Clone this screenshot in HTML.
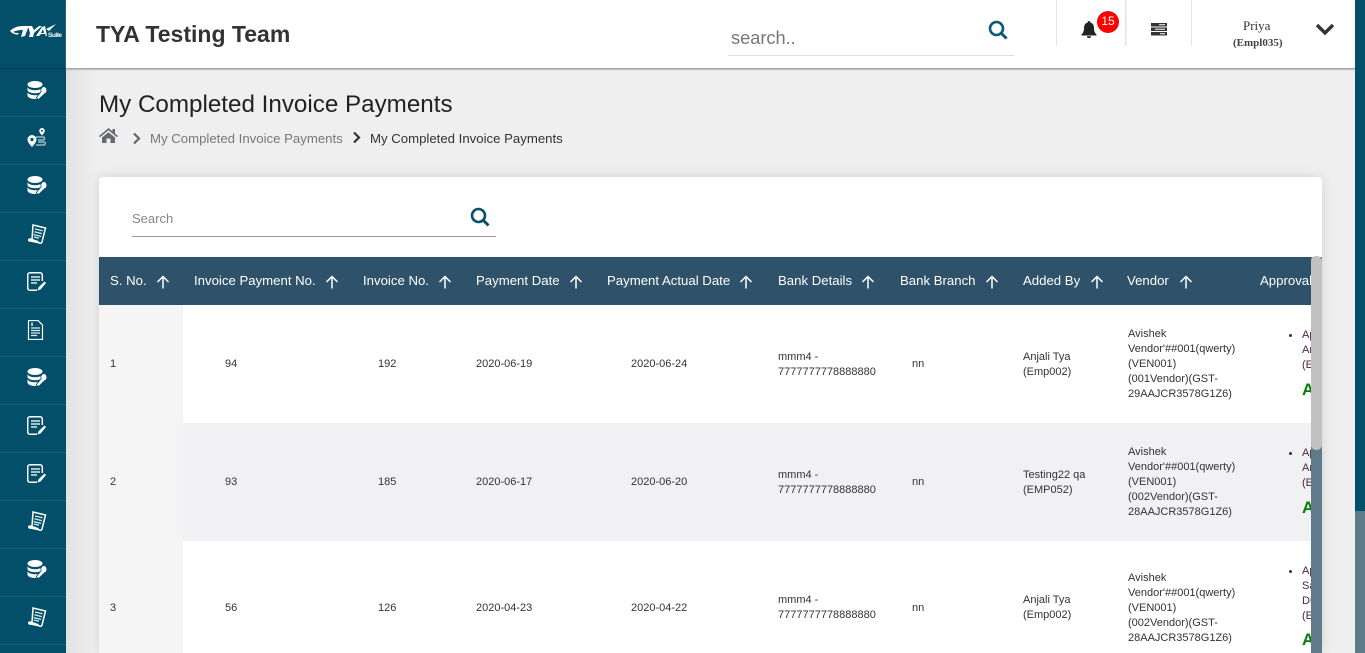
<!DOCTYPE html>
<html><head><meta charset="utf-8"><title>My Completed Invoice Payments</title>
<style>
*{box-sizing:border-box}
html,body{margin:0;padding:0;width:1365px;height:653px;overflow:hidden;background:#efefef;font-family:"Liberation Sans",sans-serif}
.a{position:absolute;white-space:nowrap}
#side{position:absolute;left:0;top:0;width:66px;height:653px;background:#034f69}
#side i{position:absolute;left:0;width:66px;height:1px;background:#1d6179}
#side svg{position:absolute;left:27px;width:20px;height:20px}
.sh{position:absolute;left:66px;top:69px;width:30px;height:584px;background:linear-gradient(90deg,#e2e2e2,#efefef)}
#head{position:absolute;left:66px;top:0;width:1289px;height:69px;background:#fff;border-bottom:1px solid #a5a5a5;box-shadow:0 1px 1px #bbb}
.vl{position:absolute;top:0;width:1px;height:46px;background:#e6e6e6}
#card{position:absolute;left:99px;top:177px;width:1223px;height:476px;background:#fff;border-radius:4px 4px 0 0;box-shadow:0 0 12px rgba(0,0,0,.12);overflow:hidden}
#thead{position:absolute;left:99px;top:257px;width:1212px;height:48px;background:#2d5269;overflow:hidden}
#thead span{position:absolute;top:16px;font-size:13.2px;color:#fff;white-space:nowrap}
#thead svg{position:absolute;top:18px;width:14px;height:14px}
.row{position:absolute;left:99px;width:1212px;overflow:hidden}
.row span,.row b,.row div{position:absolute}
.c{font-size:11px;color:#333;line-height:15px;white-space:nowrap;margin-top:1px}
.vend{left:1029px;font-size:11px;line-height:15px;color:#333;white-space:nowrap;margin-top:1px}
.dot{left:1190px;width:3px;height:3px;border-radius:50%;background:#333}
.ap{left:1203px;font-size:11px;line-height:15px;color:#4b2342;white-space:nowrap;margin-top:1px}
.A{left:1203px;font-size:17px;font-weight:bold;color:#0a7c0a}
</style></head><body>
<svg width="0" height="0" style="position:absolute"><defs>
<g id="db"><ellipse cx="8" cy="3.500" rx="7.500" ry="3.500" fill="#fff"/><path d="M.5 5.800c0 2 3.300 3.500 7.500 3.500s7.500-1.500 7.500-3.500v3c0 2-3.300 3.500-7.500 3.500s-7.500-1.500-7.500-3.500z" fill="#fff"/><path d="M.5 10.800c0 2 3.300 3.500 7.500 3.500 1 0 2-.1 3-.3l-1 3.800c-.6.1-1.300.2-2 .2-4.200 0-7.500-1.600-7.500-3.600z" fill="#fff"/><path d="M16.500 5.500a3.800 3.800 0 0 1 1 7.300l-6 5.700-2.300-1.800 5-6a3.800 3.800 0 0 1 2.300-5.200z" fill="#fff" stroke="#034f69" stroke-width=".8"/></g>
<g id="map"><path d="M15 0a2.800 2.800 0 0 0-2.800 2.800c0 2 2.800 4.700 2.800 4.700s2.800-2.700 2.800-4.700A2.800 2.800 0 0 0 15 0z" fill="#fff"/><circle cx="15" cy="2.800" r="1" fill="#034f69"/><path d="M5 7a4.500 4.500 0 0 0-4.500 4.500C.5 14.500 5 19 5 19s4.500-4.500 4.500-7.500A4.500 4.500 0 0 0 5 7z" fill="#fff"/><circle cx="5" cy="11.500" r="1.600" fill="#034f69"/><path d="M9 9h7.500c1.500 0 1.500 3-.5 3h-5M11 14h6.500c1 0 1 3-.5 3H9" fill="none" stroke="#b8d0d8" stroke-width="1.200"/></g>
<g id="scroll"><path d="M6 1l12.500 3-3.500 14c-.4 1-1.300 1.500-2.200 1.200L5 15.500z" fill="none" stroke="#fff" stroke-width="1.500"/><path d="M1 15.500c.5-1 1.500-1.500 3-1l7.500 2.500c-.3 1-.2 1.800.5 2.500l-8.500-1.800C2 18.200.8 17 1 15.500z" fill="#fff"/><path d="M8 5l7.500 1.800M7.300 7.800l7.500 1.800M6.600 10.600l7.500 1.800M7 13l5 1.300" stroke="#dce9ed" stroke-width="1.300" fill="none"/></g>
<g id="note"><path d="M11 18.300H4a2.300 2.300 0 0 1-2.300-2.300V3A2.300 2.300 0 0 1 4 .8h10A2.300 2.300 0 0 1 16.300 3v6" fill="none" stroke="#fff" stroke-width="1.500" transform="translate(-1 0)"/><path d="M4 5h9M4 8h9M4 11h6" stroke="#dce9ed" stroke-width="1.600"/><path d="M17.500 9.500l1.500 1.500-5.500 6.500-3 1 .8-3z" fill="#fff"/></g>
<g id="doc"><path d="M2.500 .5h9.500l4.500 4.500v14.500h-14z" fill="none" stroke="#fff" stroke-width="1.200"/><path d="M5 8h9M5 10.500h9M5 13h9M5 15.500h6" stroke="#dce9ed" stroke-width="1.300"/><path d="M6 2.500v3.500" stroke="#fff" stroke-width="1.300"/></g>
<g id="up"><path d="M7 13.500V1.500M1.500 7L7 1.500 12.500 7" fill="none" stroke="#fff" stroke-width="1.500"/></g>
</defs></svg>

<div id="side">
<svg style="left:10px;top:20px;width:52px;height:20px;overflow:visible" viewBox="0 0 52 20"><path d="M0 11c3-3 7-5 13-5h9l-4 2-3 8-4 1 2-7c-5 0-8 1-10 2 2 1 4 1 6 1l-1 1.500c-3 0-6-.8-8-3.500zM18 6h4l2 4 5-4h3l-8 7-1 4h-4l1-4zM32 7l3-1 2 10h-1.300l-.3-2H31l-2 2h-3zM33 9l-2 4h3z" fill="#fff"/><path d="M36 9l10-5-7 7z" fill="#fff"/><text x="38" y="17" font-family="Liberation Sans" font-size="6.500" font-weight="bold" fill="#fff" textLength="14">Suite</text></svg>
<i style="top:68px;background:#023b50"></i><i style="top:116px"></i><i style="top:164px"></i><i style="top:212px"></i><i style="top:260px"></i><i style="top:308px"></i><i style="top:356px"></i><i style="top:404px"></i><i style="top:452px"></i><i style="top:500px"></i><i style="top:548px"></i><i style="top:596px"></i><i style="top:644px"></i>
<svg style="top:81px" viewBox="0 0 20 20"><use href="#db"/></svg>
<svg style="top:128px" viewBox="0 0 20 20"><use href="#map"/></svg>
<svg style="top:176px" viewBox="0 0 20 20"><use href="#db"/></svg>
<svg style="top:224px" viewBox="0 0 20 20"><use href="#scroll"/></svg>
<svg style="top:272px" viewBox="0 0 20 20"><use href="#note"/></svg>
<svg style="top:320px;left:26px" viewBox="0 0 20 20"><use href="#doc"/></svg>
<svg style="top:368px" viewBox="0 0 20 20"><use href="#db"/></svg>
<svg style="top:416px" viewBox="0 0 20 20"><use href="#note"/></svg>
<svg style="top:464px" viewBox="0 0 20 20"><use href="#note"/></svg>
<svg style="top:511px" viewBox="0 0 20 20"><use href="#scroll"/></svg>
<svg style="top:560px" viewBox="0 0 20 20"><use href="#db"/></svg>
<svg style="top:607px" viewBox="0 0 20 20"><use href="#scroll"/></svg>
</div>
<div class="sh"></div>

<div id="head">
<div class="a" style="left:30px;top:21px;font-size:23px;font-weight:bold;color:#333">TYA Testing Team</div>
<div class="a" style="left:665px;top:28px;font-size:18.2px;color:#777">search..</div>
<div class="a" style="left:662px;top:55px;width:286px;height:1px;background:#ddd"></div>
<svg class="a" style="left:922px;top:20px" width="20" height="20" viewBox="0 0 20 20"><circle cx="8.500" cy="8.500" r="6.500" fill="none" stroke="#0c5a75" stroke-width="2.600"/><path d="M13.500 13.500l5 5" stroke="#0c5a75" stroke-width="3"/></svg>
<div class="vl" style="left:990px"></div><div class="vl" style="left:1059px"></div><div class="vl" style="left:1060px;background:#eee"></div><div class="vl" style="left:1125px"></div>
<svg class="a" style="left:1015px;top:21px" width="16" height="17" viewBox="0 0 16 17"><path d="M8 0a1.300 1.300 0 0 1 1.300 1.500C12 2.200 13 4.500 13 7c0 3.500 1 5 2.500 6.500v1H.5v-1C2 12 3 10.500 3 7c0-2.500 1-4.800 3.700-5.500A1.300 1.300 0 0 1 8 0zM6 15.300h4a2 2 0 0 1-4 0z" fill="#222"/></svg>
<div class="a" style="left:1031px;top:11px;width:22px;height:22px;border-radius:50%;background:#f00;color:#fff;font-size:12px;text-align:center;line-height:20px">15</div>
<svg class="a" style="left:1085px;top:23px" width="16" height="13" viewBox="0 0 16 13"><path d="M0 0h16v3.500H0zM0 4.500h16V8H0zM0 9h16v3.500H0z" fill="#333"/><path d="M8 1.700h6M4 6.200h10M9 10.700h5" stroke="#fff" stroke-width="1"/></svg>
<div class="a" style="left:1177px;top:18px;font:13px 'Liberation Serif',serif;color:#333">Priya</div>
<div class="a" style="left:1167px;top:37px;font:bold 11px 'Liberation Serif',serif;color:#444">(Empl035)</div>
<svg class="a" style="left:1249px;top:22px" width="20" height="14" viewBox="0 0 20 14"><path d="M2 3l8 8 8-8" fill="none" stroke="#333" stroke-width="3.400"/></svg>
</div>

<div class="a" style="left:99px;top:91px;font-size:24.2px;color:#222">My Completed Invoice Payments</div>
<svg class="a" style="left:99px;top:127px" width="19" height="16" viewBox="0 0 19 16"><path d="M9.500 1L0 9l1 1.200 8.500-7 8.500 7L19 9l-3-2.500V2h-2.500v2.400zM3 10.500V16h4.500v-4.500h4V16H16v-5.500L9.500 5.200z" fill="#66696e"/></svg>
<svg class="a" style="left:132px;top:132px" width="10" height="13" viewBox="0 0 10 13"><path d="M2 1.500l5 5-5 5" fill="none" stroke="#666" stroke-width="2.200"/></svg>
<div class="a" style="left:150px;top:131px;font-size:13.200px;color:#777">My Completed Invoice Payments</div>
<svg class="a" style="left:352px;top:131px" width="10" height="13" viewBox="0 0 10 13"><path d="M2 1.500l5 5-5 5" fill="none" stroke="#333" stroke-width="2.200"/></svg>
<div class="a" style="left:370px;top:131px;font-size:13.200px;color:#333">My Completed Invoice Payments</div>

<div id="card"></div>
<div class="a" style="left:132px;top:211px;font-size:13px;color:#888">Search</div>
<div class="a" style="left:132px;top:236px;width:364px;height:1px;background:#999"></div>
<svg class="a" style="left:470px;top:207px" width="20" height="20" viewBox="0 0 20 20"><circle cx="8.500" cy="8.500" r="6.500" fill="none" stroke="#0c4f69" stroke-width="2.600"/><path d="M13.500 13.500l5 5" stroke="#0c4f69" stroke-width="3"/></svg>

<div id="thead">
<span style="left:11px">S. No.</span><svg style="left:57px" viewBox="0 0 14 14"><use href="#up"/></svg>
<span style="left:95px">Invoice Payment No.</span><svg style="left:226px" viewBox="0 0 14 14"><use href="#up"/></svg>
<span style="left:264px">Invoice No.</span><svg style="left:339px" viewBox="0 0 14 14"><use href="#up"/></svg>
<span style="left:377px">Payment Date</span><svg style="left:470px" viewBox="0 0 14 14"><use href="#up"/></svg>
<span style="left:508px">Payment Actual Date</span><svg style="left:640px" viewBox="0 0 14 14"><use href="#up"/></svg>
<span style="left:679px">Bank Details</span><svg style="left:762px" viewBox="0 0 14 14"><use href="#up"/></svg>
<span style="left:801px">Bank Branch</span><svg style="left:886px" viewBox="0 0 14 14"><use href="#up"/></svg>
<span style="left:924px">Added By</span><svg style="left:991px" viewBox="0 0 14 14"><use href="#up"/></svg>
<span style="left:1028px">Vendor</span><svg style="left:1080px" viewBox="0 0 14 14"><use href="#up"/></svg>
<span style="left:1161px">Approval</span>
</div>

<div class="row" style="top:305px;height:118px;background:#fff">
<div style="left:0;top:0;width:84px;height:118px;background:#f5f5f5"></div>
<span class="c" style="left:11px;top:51px">1</span><span class="c" style="left:126px;top:51px">94</span><span class="c" style="left:279px;top:51px">192</span><span class="c" style="left:377px;top:51px">2020-06-19</span><span class="c" style="left:532px;top:51px">2020-06-24</span>
<span class="c" style="left:679px;top:44px">mmm4 -<br>7777777778888880</span><span class="c" style="left:813px;top:51px">nn</span><span class="c" style="left:924px;top:44px">Anjali Tya<br>(Emp002)</span>
<span class="vend" style="top:21px">Avishek<br>Vendor'##001(qwerty)<br>(VEN001)<br>(001Vendor)(GST-<br>29AAJCR3578G1Z6)</span>
<div class="dot" style="top:29px"></div><span class="ap" style="top:22px">Approved<br>Anjali<br>(Emp)</span><b class="A" style="top:75px">Approved</b>
</div>

<div class="row" style="top:423px;height:118px;background:#f1f0f2">
<div style="left:0;top:0;width:84px;height:118px;background:#f5f5f5"></div>
<span class="c" style="left:11px;top:51px">2</span><span class="c" style="left:126px;top:51px">93</span><span class="c" style="left:279px;top:51px">185</span><span class="c" style="left:377px;top:51px">2020-06-17</span><span class="c" style="left:532px;top:51px">2020-06-20</span>
<span class="c" style="left:679px;top:44px">mmm4 -<br>7777777778888880</span><span class="c" style="left:813px;top:51px">nn</span><span class="c" style="left:924px;top:44px">Testing22 qa<br>(EMP052)</span>
<span class="vend" style="top:21px">Avishek<br>Vendor'##001(qwerty)<br>(VEN001)<br>(002Vendor)(GST-<br>28AAJCR3578G1Z6)</span>
<div class="dot" style="top:29px"></div><span class="ap" style="top:22px">Approved<br>Anjali<br>(Emp)</span><b class="A" style="top:75px">Approved</b>
</div>

<div class="row" style="top:541px;height:112px;background:#fff">
<div style="left:0;top:0;width:84px;height:112px;background:#f5f5f5"></div>
<span class="c" style="left:11px;top:59px">3</span><span class="c" style="left:126px;top:59px">56</span><span class="c" style="left:279px;top:59px">126</span><span class="c" style="left:377px;top:59px">2020-04-23</span><span class="c" style="left:532px;top:59px">2020-04-22</span>
<span class="c" style="left:679px;top:51px">mmm4 -<br>7777777778888880</span><span class="c" style="left:813px;top:59px">nn</span><span class="c" style="left:924px;top:51px">Anjali Tya<br>(Emp002)</span>
<span class="vend" style="top:29px">Avishek<br>Vendor'##001(qwerty)<br>(VEN001)<br>(002Vendor)(GST-<br>28AAJCR3578G1Z6)</span>
<div class="dot" style="top:29px"></div><span class="ap" style="top:22px">Approved<br>Sa<br>Du<br>(Emp)</span><b class="A" style="top:89px">Approved</b>
</div>

<div class="a" style="left:1311px;top:257px;width:11px;height:396px;background:#5f7a88"></div>
<div class="a" style="left:1311px;top:256px;width:11px;height:194px;background:#c1c1c1;border-radius:5px"></div>
<div class="a" style="left:1355px;top:0;width:10px;height:511px;background:#034f69"></div>
<div class="a" style="left:1355px;top:511px;width:10px;height:142px;background:#5f7a88"></div>
</body></html>
